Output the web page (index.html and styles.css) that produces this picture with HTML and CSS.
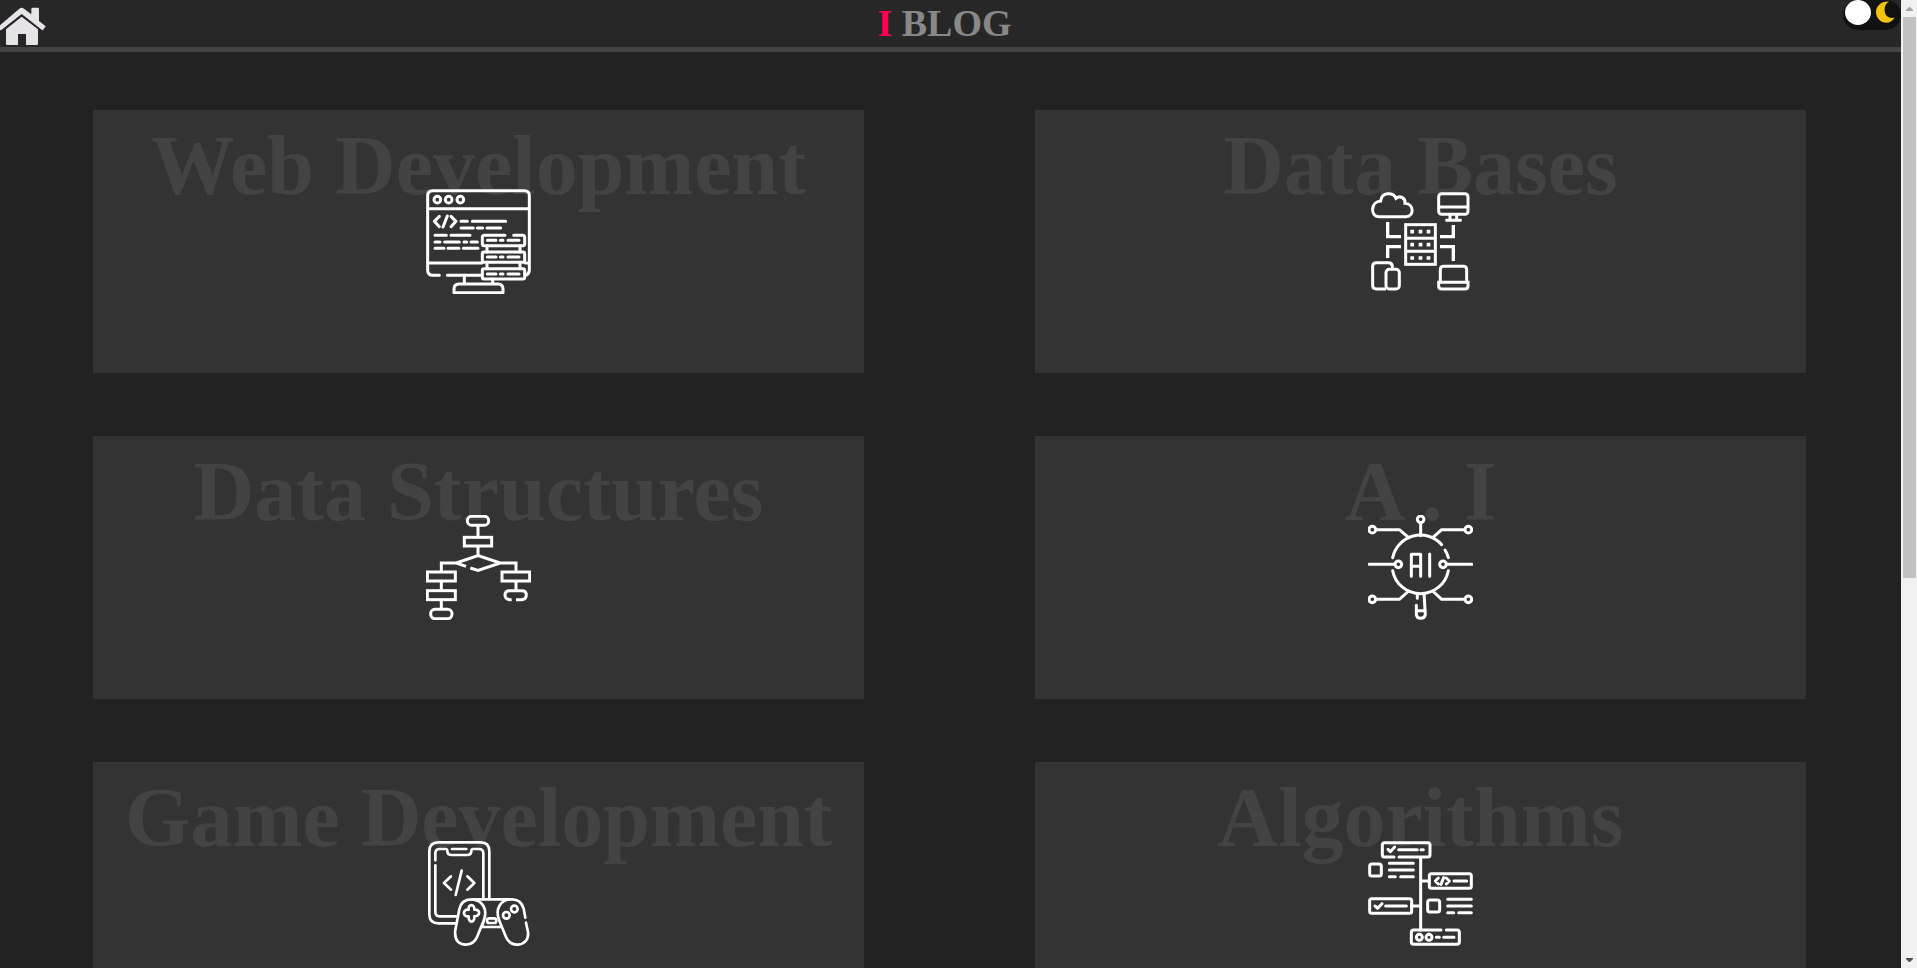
FILE: index.html
```html
<!DOCTYPE html>
<html lang="en">
<head>
<meta charset="utf-8">
<title>I BLOG</title>
<link rel="stylesheet" href="styles.css">
</head>
<body>
<div class="page">
  <header class="topbar">
    <a class="home" href="#" aria-label="Home">
      <svg viewBox="0 21 138 114" aria-hidden="true">
        <path d="M0 76L58 26Q65 20 72 26L94 43V27Q94 23 98 23H113Q117 23 117 27V63L137 79L129 90Q128 91 126 90L65 42L4 90L0 91Z"/>
        <path d="M65 50L114 88V131Q114 135 110 135H78V102H54V135H22Q18 135 18 131V88Z"/>
      </svg>
    </a>
    <h1 class="brand"><span class="brand-mark">I</span> BLOG</h1>
    <label class="toggle">
      <input class="toggle-input" type="checkbox" aria-label="Dark mode">
      <span class="toggle-ball"></span>
      <svg class="moon" viewBox="237 3 58 66" aria-hidden="true">
        <path d="M277 4C261 12 260 34 268 46C275 55 286 55 294 53C288 63 280 69 269 69C251 69 237 54 237 36C237 18 253 2 277 4Z"/>
      </svg>
    </label>
  </header>
  <main class="topics">
    <a class="card" href="#">
      <h2 class="card-title">Web Development</h2>
      <svg class="card-icon" viewBox="78 57 315 315" aria-hidden="true">
        <path d="M118 316H98Q83 316 83 300V77Q83 62 98 62H373Q388 62 388 77V300Q388 312 377 316M83 116H388M83 279H246M142 316H246M376 279H388"/>
        <circle cx="112" cy="89" r="10"/><circle cx="146" cy="89" r="10"/><circle cx="181" cy="89" r="10"/>
        <path d="M118 139L103 154L118 170M142 138L129 171M153 139L168 154L153 170"/>
        <path d="M183 154H202M217 154H317M183 174H220M232 174H248M261 174H302M105 196H139M153 196H210M105 216H120M134 216H178M192 216H200M213 216H232M105 235H132M144 235H177M190 235H234"/>
        <path d="M315 196H253Q247 196 247 202V221Q247 227 253 227H368Q374 227 374 221V202Q374 196 368 196H341"/>
        <rect x="247" y="246" width="127" height="31" rx="5"/><rect x="247" y="296" width="127" height="31" rx="5"/>
        <path d="M261 227V246M360 227V246M261 277V296M360 277V296M262 211H288M301 211H309M324 211H357M262 261H288M301 261H309M324 261H357M262 312H288M301 312H309M324 312H357"/>
        <path d="M193 316V341M278 327V341M162 368V357Q162 342 177 342H294Q309 342 309 357V368Z"/>
      </svg>
    </a>
    <a class="card" href="#">
      <h2 class="card-title">Data Bases</h2>
      <svg class="card-icon icon-square" viewBox="84 57 315 315" aria-hidden="true">
        <path d="M117 140C90 140 91 95 122 93C125 66 160 65 168 85C181 75 197 84 195 100C222 101 224 140 198 140Z"/>
        <rect x="296" y="71" width="88" height="62" rx="9"/>
        <path d="M296 111H384M330 133V150M350 133V150M316 151H365"/>
        <rect x="197" y="164" width="89" height="119"/>
        <path d="M197 205H286M197 244H286"/>
        <path stroke-width="11" d="M211 185H222M236 185H247M260 185H271M211 224H222M236 224H247M260 224H271M211 264H222M236 264H247M260 264H271"/>
        <path stroke-width="10" d="M143 156V200H183M340 165V200H300M143 264V230H183M340 273V230H300"/>
        <path d="M138 357H109Q98 357 98 346V289Q98 278 109 278H146Q157 278 157 290V297"/>
        <rect x="138" y="298" width="40" height="59" rx="10"/>
        <path d="M301 337V299Q301 289 311 289H370Q380 289 380 299V337M296 337H384V348Q384 357 374 357H306Q296 357 296 348Z"/>
      </svg>
    </a>
    <a class="card" href="#">
      <h2 class="card-title">Data Structures</h2>
      <svg class="card-icon icon-square" viewBox="78 42 315 315" aria-hidden="true">
        <rect x="202" y="46" width="64" height="27" rx="13"/>
        <rect x="193" y="109" width="82" height="26"/>
        <path d="M234 73V109M234 135V164M198 196L168 186L234 164L301 186L234 208L211 201M168 186H124V213M301 186H348V213"/>
        <rect x="82" y="213" width="84" height="27"/><rect x="82" y="269" width="84" height="27"/><rect x="306" y="213" width="83" height="27"/>
        <path d="M124 240V269M124 296V325M348 240V269M335 296H329Q315 294 315 282Q315 269 329 269H366Q379 269 379 282Q379 294 366 296H348"/>
        <rect x="92" y="325" width="64" height="28" rx="13"/>
      </svg>
    </a>
    <a class="card" href="#">
      <h2 class="card-title">A . I</h2>
      <svg class="card-icon" viewBox="84 42 315 315" aria-hidden="true">
        <path d="M158 170A85 85 0 0 1 305 131M315 147Q322 158 325 170M158 209A85 85 0 0 0 325 209"/>
        <circle cx="242" cy="55" r="10"/><circle cx="97" cy="86" r="10"/><circle cx="385" cy="86" r="10"/>
        <circle cx="175" cy="190" r="10"/><circle cx="309" cy="190" r="10"/><circle cx="97" cy="295" r="10"/><circle cx="385" cy="295" r="10"/>
        <path d="M242 66V104M108 86H178L206 110M374 86H305L278 110M88 190H164M320 190H395M108 295H178L206 270M374 295H305L278 270"/>
        <path d="M214 226V160H242V226M214 196H242M269 159V226"/>
        <path d="M232 277V292M229 313V341Q231 352 242 352Q254 352 256 341L252 277M229 329H256"/>
      </svg>
    </a>
    <a class="card" href="#">
      <h2 class="card-title">Game Development</h2>
      <svg class="card-icon icon-fine" viewBox="78 45 315 315" aria-hidden="true">
        <path d="M167 292H115Q88 292 88 265V76Q88 49 115 49H242Q268 49 268 76V219"/>
        <path d="M106 103V82Q106 69 119 69H138Q142 69 142 76Q143 87 155 87H201Q213 87 214 76Q214 69 219 69H237Q250 69 250 82V219M106 118V258Q106 271 119 271H169M156 69H199"/>
        <path d="M153 151L132 171L153 191M185 134L167 207M202 151L223 171L202 191"/>
        <path d="M376 275L371 248Q363 220 336 220H214Q184 220 178 250L166 312C162 345 178 356 198 356Q222 355 231 333L251 284C265 249 246 221 214 220M336 220C298 220 285 252 298 284L318 333Q327 355 350 356C371 357 387 342 384 318L378 290M255 272L246 303H305L294 272"/>
        <path d="M206 251C203 233 225 233 223 251C242 248 242 272 223 271C225 292 204 292 206 271C187 273 187 249 206 251Z"/>
        <circle cx="343" cy="249" r="10"/><circle cx="319" cy="268" r="10"/>
        <rect x="261" y="277" width="28" height="14" rx="7"/>
      </svg>
    </a>
    <a class="card" href="#">
      <h2 class="card-title">Algorithms</h2>
      <svg class="card-icon" viewBox="84 45 315 315" aria-hidden="true">
        <path d="M162 93H134Q127 93 127 86V57Q127 50 134 50H263Q270 50 270 57V86Q270 93 263 93H177M242 93V312M242 165H268M215 240H242"/>
        <rect x="89" y="114" width="35" height="36" rx="7"/><rect x="263" y="222" width="36" height="36" rx="7"/>
        <rect x="268" y="143" width="126" height="44" rx="6"/><rect x="89" y="218" width="126" height="44" rx="6"/>
        <path d="M303 312H221Q214 312 214 319V348Q214 355 221 355H351Q358 355 358 348V319Q358 312 351 312H319"/>
        <path d="M144 70L151 77L164 63M105 240L113 247L126 233M176 71H232M243 71H250M137 240H199M342 165H380"/>
        <path d="M148 112H220M148 132H220M148 152H166M182 152H220M323 220H394M323 240H394M323 260H341M356 260H394"/>
        <path d="M295 156L286 165L295 174M311 155L303 175M319 156L328 165L319 174"/>
        <circle cx="238" cy="334" r="9"/><circle cx="267" cy="334" r="9"/>
        <path d="M289 334H298M311 334H342"/>
      </svg>
    </a>
  </main>
</div>
<div class="scrollbar" aria-hidden="true">
  <svg class="scroll-arrow arrow-up" viewBox="0 0 7 4"><path d="M3 0H4L7 3V4H0V3Z"/></svg>
  <div class="scroll-track"><div class="scroll-thumb"></div></div>
  <svg class="scroll-arrow arrow-down" viewBox="0 0 7 4"><path d="M0 0H7V1L4 4H3L0 1Z"/></svg>
</div>
</body>
</html>
```
FILE: styles.css
```css
* {
  box-sizing: border-box;
}

body {
  display: flex;
  height: 100vh;
  margin: 0;
  overflow: hidden;
  background: #222;
  font-family: "Times New Roman", "Liberation Serif", serif;
}

.page {
  flex: 1;
  min-width: 0;
  overflow: hidden;
}

.topbar {
  display: flex;
  justify-content: space-between;
  align-items: flex-start;
  height: 52px;
  border-bottom: 5px solid #444;
  background: #272727;
}

.home {
  padding-top: 7px;
}

.home svg {
  display: block;
  width: 46px;
  height: 38px;
  fill: #e6e4e6;
}

.brand {
  margin: 0;
  color: #888;
  font-size: 38px;
  line-height: 47px;
}

.brand-mark {
  color: #ff0052;
}

.toggle {
  display: flex;
  align-items: flex-start;
  justify-content: space-between;
  width: 58px;
  height: 30px;
  padding: 0 6px 0 2px;
  border-radius: 15px;
  background: #111;
}

.toggle-input {
  position: absolute;
  opacity: 0;
}

.toggle-ball {
  width: 26px;
  height: 25px;
  border-radius: 50%;
  background: #fff;
}

.moon {
  width: 19px;
  height: 22px;
  margin-top: 1px;
  fill: #f1c40f;
}

.topics {
  display: grid;
  grid-template-columns: 1fr 1fr;
  gap: 63px 171px;
  padding: 58px 95px 58px 93px;
}

.card {
  display: grid;
  height: 263px;
  background: #333;
  text-decoration: none;
}

.card-title,
.card-icon {
  grid-area: 1 / 1;
}

.card-title {
  margin: 0;
  padding-top: 8px;
  color: #434343;
  font-size: 84px;
  line-height: 96px;
  text-align: center;
  white-space: nowrap;
}

.card-icon {
  place-self: center;
  width: 105px;
  height: 105px;
  fill: none;
  stroke: #fff;
  stroke-width: 9;
  stroke-linecap: round;
  stroke-linejoin: round;
}

.icon-square {
  stroke-linecap: butt;
  stroke-linejoin: miter;
}

.icon-fine {
  stroke-width: 8;
}

.scrollbar {
  display: flex;
  flex-direction: column;
  align-items: center;
  width: 16px;
  padding: 7px 1px 6px 2px;
  background: #f1f1f1;
}

.scroll-arrow {
  width: 7px;
  height: 4px;
}

.arrow-up {
  fill: #a3a3a3;
}

.arrow-down {
  fill: #505050;
}

.scroll-track {
  flex: 1;
  width: 13px;
  padding: 6px 0;
}

.scroll-thumb {
  height: 60%;
  background: #c1c1c1;
}
```
